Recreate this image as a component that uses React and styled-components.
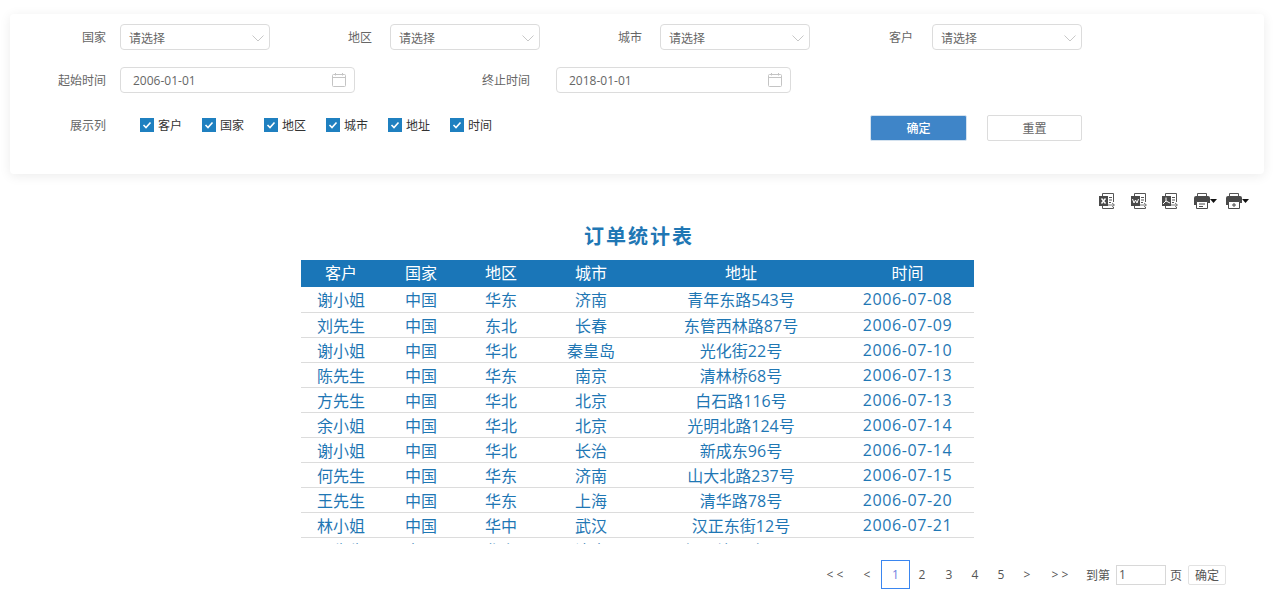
import React from 'react'
import styled, { createGlobalStyle } from 'styled-components'

const FONT = `"Open Sans", "Noto Sans CJK SC", sans-serif`

const GlobalStyle = createGlobalStyle`
    html, body {
        margin: 0;
        padding: 0;
        height: 100%;
        overflow: hidden;
        background: #fff;
        font-family: ${FONT};
    }
    * {
        box-sizing: border-box;
    }
`

const Page = styled.div`
    height: 613px;
    padding-top: 14px;
    overflow: hidden;
`
const FilterCard = styled.div`
    height: 160px;
    margin: 0 10px;
    padding-top: 10px;
    background: #fff;
    border-radius: 4px;
    box-shadow: 0 2px 12px rgba(0, 0, 0, 0.08);
`
const Row = styled.div`
    display: flex;
    align-items: center;
    height: 26px;
    margin-bottom: ${props => props.$after || 0}px;
`
const Label = styled.label`
    width: ${props => props.$width}px;
    margin-right: ${props => props.$gap}px;
    margin-bottom: ${props => props.$lift || 0}px;
    flex: none;
    text-align: right;
    font-size: 12px;
    color: #666;
`
const SelectBox = styled.div`
    width: 150px;
    height: 26px;
    flex: none;
    display: flex;
    align-items: center;
    justify-content: space-between;
    padding: 2px 3px 0 8px;
    border: 1px solid #dcdcdc;
    border-radius: 4px;
    font-size: 12px;
    color: #666;
`
const DateBox = styled.div`
    width: 235px;
    height: 26px;
    flex: none;
    display: flex;
    align-items: center;
    justify-content: space-between;
    padding: 0 8px 0 12px;
    border: 1px solid #dcdcdc;
    border-radius: 4px;
    font-size: 12px;
    color: #666;
`
const ChecksRow = styled.div`
    display: flex;
    margin: 0 0 6px 34px;
    width: 390px;
`
const CheckItem = styled.div`
    width: 62px;
    display: flex;
    align-items: center;
    gap: 4px;
    font-size: 12px;
    color: #333;
`
const CheckMark = styled.span`
    width: 14px;
    height: 14px;
    display: flex;
    align-items: center;
    justify-content: center;
    background: #1f80c0;
`
const Button = styled.button`
    width: ${props => props.$width}px;
    height: 26px;
    margin-left: ${props => props.$left}px;
    padding: 0;
    flex: none;
    border: 1px solid ${props => (props.$primary ? '#d4e2ef' : '#dcdcdc')};
    border-radius: 2px;
    background: ${props => (props.$primary ? '#3f85c8' : '#fff')};
    color: ${props => (props.$primary ? '#fff' : '#666')};
    font-family: ${FONT};
    font-size: 12px;
    font-weight: ${props => (props.$primary ? 500 : 400)};
`
const Toolbar = styled.div`
    display: flex;
    justify-content: flex-end;
    align-items: center;
    height: 26px;
    margin-top: 14px;
    padding-right: 25px;
`
const ToolIcon = styled.span`
    display: flex;
    margin-left: ${props => props.$left}px;
`
const Title = styled.h1`
    margin: 7px 0 0;
    height: 31px;
    padding-left: 4px;
    line-height: 31px;
    text-align: center;
    font-size: 20px;
    font-weight: 700;
    letter-spacing: 2px;
    color: #1f77b4;
`
const TableClip = styled.div`
    width: 673px;
    height: 284px;
    margin: 8px 0 0 301px;
    overflow: hidden;
`
const Table = styled.table`
    width: 673px;
    border-collapse: collapse;
    table-layout: fixed;
    font-size: 16px;
`
const HeadCell = styled.th`
    height: 27px;
    padding: 0 0 3px;
    background: #1a76b8;
    color: #fff;
    font-weight: 400;
    text-align: center;
`
const Cell = styled.td`
    height: 25px;
    padding: 0;
    border-bottom: 1px solid #dcdcdc;
    color: #1f77b4;
    text-align: center;
    letter-spacing: ${props => (props.$date ? '0.6px' : '0')};
`
const Pager = styled.div`
    display: flex;
    align-items: center;
    height: 29px;
    margin-top: 16px;
    padding-left: 822px;
    font-size: 12px;
    color: #555;
`
const PageLink = styled.span`
    width: ${props => props.$width || 26}px;
    height: 29px;
    flex: none;
    display: flex;
    align-items: center;
    justify-content: center;
    padding-left: ${props => props.$indent || 0}px;
    padding-right: ${props => props.$trail || 0}px;
    border: 1px solid ${props => (props.$active ? '#3a86f0' : 'transparent')};
    color: ${props => (props.$active ? '#6f7fe0' : '#555')};
`
const PageText = styled.span`
    flex: none;
    margin: 0 6px 0 ${props => props.$left || 0}px;
    color: #555;
`
const PageInput = styled.div`
    width: 50px;
    height: 20px;
    flex: none;
    padding-left: 2px;
    line-height: 18px;
    border: 1px solid #d8d8d8;
    color: #555;
`
const PageButton = styled.button`
    width: 38px;
    height: 20px;
    flex: none;
    padding: 0;
    border: 1px solid #e2e2e2;
    border-radius: 2px;
    background: #fff;
    color: #555;
    font-family: ${FONT};
    font-size: 12px;
`

const Chevron = () => (
    <svg width="16" height="16" viewBox="0 0 16 16" fill="none">
        <path d="M2.5 5.5 L8 11 L13.5 5.5" stroke="#c8c8c8" strokeWidth="1" />
    </svg>
)
const Calendar = () => (
    <svg width="14" height="14" viewBox="0 0 14 14" fill="none" stroke="#c4c4c4">
        <rect x="0.5" y="1.5" width="13" height="12" rx="1" />
        <path d="M0.5 4.5 H13.5 M3.5 0 V2.5 M10.5 0 V2.5" />
    </svg>
)
const Tick = () => (
    <svg width="10" height="10" viewBox="0 0 10 10" fill="none">
        <path d="M1.5 5 L4 7.5 L8.5 2.5" stroke="#fff" strokeWidth="1.6" />
    </svg>
)
// export icons share the page and arrow, only the badge changes
const ExportIcon = ({ children }) => (
    <svg width="18" height="18" viewBox="0 0 18 18" fill="none">
        <path d="M4.5 4 V1.5 H15.5 V10 M15.5 15 V16.5 H4.5 V14" stroke="#555" />
        <path d="M11 5.5 H14 M11 8 H14 M11 10.5 H13" stroke="#555" />
        <path d="M10 13 H16 M14 11 L16.5 13 L14 15" stroke="#777" />
        <rect x="1" y="4" width="9" height="10" fill="#4a4a4a" />
        {children}
    </svg>
)
const PrintIcon = ({ children }) => (
    <svg width="24" height="18" viewBox="0 0 24 18" fill="none">
        <path d="M4.5 4 V1.5 H13.5 V4" stroke="#555" />
        <path d="M1 13 V6 Q1 4 3 4 H15 Q17 4 17 6 V11 H15 V13 H14 V9 H4 V13 Z" fill="#4a4a4a" />
        <path d="M3.5 9.5 H14.5 V16.5 H3.5 Z" stroke="#4a4a4a" fill="#fff" />
        <path d="M17 7 H24 L20.5 11 Z" fill="#111" />
        {children}
    </svg>
)

const columns = [
    { title: '客户', width: 80 },
    { title: '国家', width: 80 },
    { title: '地区', width: 80 },
    { title: '城市', width: 100 },
    { title: '地址', width: 200 },
    { title: '时间', width: 133 },
]
const rows = [
    ['谢小姐', '中国', '华东', '济南', '青年东路543号', '2006-07-08'],
    ['刘先生', '中国', '东北', '长春', '东管西林路87号', '2006-07-09'],
    ['谢小姐', '中国', '华北', '秦皇岛', '光化街22号', '2006-07-10'],
    ['陈先生', '中国', '华东', '南京', '清林桥68号', '2006-07-13'],
    ['方先生', '中国', '华北', '北京', '白石路116号', '2006-07-13'],
    ['余小姐', '中国', '华北', '北京', '光明北路124号', '2006-07-14'],
    ['谢小姐', '中国', '华北', '长治', '新成东96号', '2006-07-14'],
    ['何先生', '中国', '华东', '济南', '山大北路237号', '2006-07-15'],
    ['王先生', '中国', '华东', '上海', '清华路78号', '2006-07-20'],
    ['林小姐', '中国', '华中', '武汉', '汉正东街12号', '2006-07-21'],
    ['王先生', '中国', '华东', '济南', '经三纬二路48号', '2006-07-24'],
]
const selects = [
    { label: '国家', width: 96, gap: 14 },
    { label: '地区', width: 102, gap: 18 },
    { label: '城市', width: 102, gap: 18 },
    { label: '客户', width: 103, gap: 19 },
]

export default function App() {
    return (
        <Page>
            <GlobalStyle />
            <FilterCard>
                <Row $after={17}>
                    {selects.map(s => (
                        <React.Fragment key={s.label}>
                            <Label $width={s.width} $gap={s.gap}>{s.label}</Label>
                            <SelectBox>请选择<Chevron /></SelectBox>
                        </React.Fragment>
                    ))}
                </Row>
                <Row $after={22}>
                    <Label $width={96} $gap={14}>起始时间</Label>
                    <DateBox>2006-01-01<Calendar /></DateBox>
                    <Label $width={175} $gap={26}>终止时间</Label>
                    <DateBox>2018-01-01<Calendar /></DateBox>
                </Row>
                <Row>
                    <Label $width={96} $gap={0} $lift={6}>展示列</Label>
                    <ChecksRow>
                        {columns.map(c => (
                            <CheckItem key={c.title}><CheckMark><Tick /></CheckMark>{c.title}</CheckItem>
                        ))}
                    </ChecksRow>
                    <Button $primary $width={97} $left={340}>确定</Button>
                    <Button $width={95} $left={20}>重置</Button>
                </Row>
            </FilterCard>
            <Toolbar>
                <ToolIcon><ExportIcon><path d="M3.5 6.5 L7.5 11.5 M7.5 6.5 L3.5 11.5" stroke="#fff" strokeWidth="1.4" /></ExportIcon></ToolIcon>
                <ToolIcon $left={14}><ExportIcon><path d="M2.5 7 L4 11 L5.5 8 L7 11 L8.5 7" stroke="#fff" /></ExportIcon></ToolIcon>
                <ToolIcon $left={13}><ExportIcon><path d="M5 5.5 V9 L2 12 M5 9 L9 11" stroke="#fff" /></ExportIcon></ToolIcon>
                <ToolIcon $left={14}><PrintIcon><path d="M6 12 H12 M6 14.5 H10" stroke="#4a4a4a" /></PrintIcon></ToolIcon>
                <ToolIcon $left={8}><PrintIcon><path d="M9 11 V15 M7 13 H11" stroke="#4a4a4a" /></PrintIcon></ToolIcon>
            </Toolbar>
            <Title>订单统计表</Title>
            <TableClip>
                <Table>
                    <colgroup>
                        {columns.map(c => <col key={c.title} width={c.width} />)}
                    </colgroup>
                    <thead>
                        <tr>{columns.map(c => <HeadCell key={c.title}>{c.title}</HeadCell>)}</tr>
                    </thead>
                    <tbody>
                        {rows.map((row, i) => (
                            <tr key={i}>{row.map((v, j) => <Cell key={j} $date={j === 5}>{v}</Cell>)}</tr>
                        ))}
                    </tbody>
                </Table>
            </TableClip>
            <Pager>
                <PageLink>&lt; &lt;</PageLink>
                <PageLink $width={33} $indent={5}>&lt;</PageLink>
                <PageLink $active $width={29}>1</PageLink>
                <PageLink $trail={2}>2</PageLink>
                <PageLink>3</PageLink>
                <PageLink>4</PageLink>
                <PageLink>5</PageLink>
                <PageLink>&gt;</PageLink>
                <PageLink $width={40}>&gt; &gt;</PageLink>
                <PageText $left={6}>到第</PageText>
                <PageInput>1</PageInput>
                <PageText $left={4}>页</PageText>
                <PageButton>确定</PageButton>
            </Pager>
        </Page>
    )
}
